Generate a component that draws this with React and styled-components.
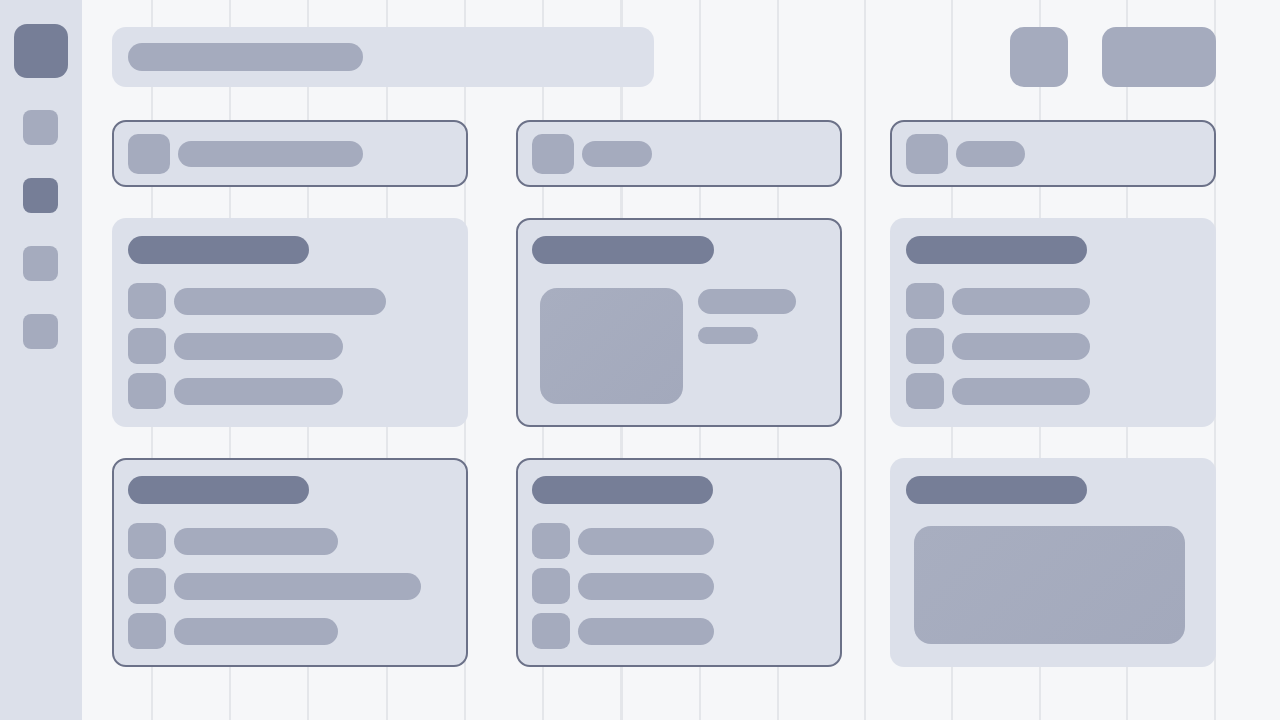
import React from "react";
import styled, { createGlobalStyle } from "styled-components";

const GlobalStyle = createGlobalStyle`
  html, body {
    margin: 0;
    padding: 0;
    background: #f6f7f9;
    font-family: "Inter", "Liberation Sans", sans-serif;
  }
  * { box-sizing: border-box; }
`;

const colors = {
  bg: "#f6f7f9",
  panel: "#dce0ea",
  mid: "#a5abbe",
  dark: "#767e97",
  border: "#6b7188",
  line: "#e4e6ea",
};

const Shell = styled.div`
  display: flex;
  width: 1280px;
  height: 720px;
  overflow: hidden;
`;

const Sidebar = styled.aside`
  width: 82px;
  flex-shrink: 0;
  background: ${colors.panel};
  display: flex;
  flex-direction: column;
  align-items: center;
  padding-top: 24px;
`;

const Logo = styled.div`
  width: 54px;
  height: 54px;
  border-radius: 13px;
  background: ${colors.dark};
  margin-bottom: 32px;
  margin-right: 1px;
`;

const NavItem = styled.div`
  width: 35px;
  height: 35px;
  border-radius: 8px;
  background: ${({ $active }) => ($active ? colors.dark : colors.mid)};
  margin-bottom: 33px;
  margin-right: 2px;
`;

/* vertical guide lines behind the content */
const Main = styled.main`
  flex: 1;
  padding: 27px 64px 0 30px;
  background-color: ${colors.bg};
  background-image:
    repeating-linear-gradient(to right, ${colors.line} 0 2px, transparent 2px 78.25px),
    repeating-linear-gradient(to right, ${colors.line} 0 2px, transparent 2px 87.5px);
  background-repeat: no-repeat;
  background-position: 69px 0, 782px 0;
  background-size: 630px 100%, 355px 100%;
`;

const TopBar = styled.header`
  display: flex;
  align-items: center;
  height: 60px;
  margin-bottom: 33px;
`;

const Search = styled.div`
  width: 542px;
  height: 60px;
  border-radius: 14px;
  background: ${colors.panel};
  display: flex;
  align-items: center;
  padding-left: 16px;
`;

const Bar = styled.div`
  width: ${({ $w }) => $w}px;
  height: ${({ $h = 27 }) => $h}px;
  border-radius: 999px;
  background: ${({ $dark }) => ($dark ? colors.dark : colors.mid)};
  flex-shrink: 0;
`;

const Actions = styled.div`
  margin-left: auto;
  display: flex;
  gap: 34px;
`;

const ActionBlock = styled.div`
  width: ${({ $w }) => $w}px;
  height: 60px;
  border-radius: 14px;
  background: ${colors.mid};
`;

const Grid = styled.div`
  display: grid;
  grid-template-columns: 356px 326px 326px;
  grid-template-rows: 67px 209px 209px;
  column-gap: 48px;
  row-gap: 31px;
`;

const Card = styled.div`
  background: ${colors.panel};
  border-radius: 14px;
  border: 2px solid ${({ $outlined }) => ($outlined ? colors.border : "transparent")};
  padding: 16px 14px;
  display: flex;
  flex-direction: column;
`;

const StatCard = styled(Card)`
  flex-direction: row;
  align-items: center;
  gap: 8px;
  padding: 0 14px;
`;

const Square = styled.div`
  width: ${({ $w }) => $w}px;
  height: ${({ $h }) => $h}px;
  border-radius: ${({ $r = 9 }) => $r}px;
  background: ${colors.mid};
  flex-shrink: 0;
`;

const List = styled.div`
  display: flex;
  flex-direction: column;
  gap: 9px;
  margin-top: 19px;
`;

const Row = styled.div`
  display: flex;
  align-items: center;
  gap: 8px;
  height: 36px;
`;

const Media = styled.div`
  display: flex;
  gap: 15px;
  margin-top: ${({ $top = 24 }) => $top}px;
  padding-left: 8px;
`;

const MediaText = styled.div`
  display: flex;
  flex-direction: column;
  gap: 13px;
  padding-top: 1px;
`;

const Picture = styled.div`
  width: ${({ $w }) => $w}px;
  height: ${({ $h }) => $h}px;
  border-radius: 17px;
  background: linear-gradient(135deg, #a8aec0, #a3a9bc);
  flex-shrink: 0;
`;

function ListCard({ outlined, bars, icon = 38 }) {
  return (
    <Card $outlined={outlined}>
      <Bar $w={181} $h={28} $dark />
      <List>
        {bars.map((w, i) => (
          <Row key={i}>
            <Square $w={icon} $h={36} />
            <Bar $w={w} />
          </Row>
        ))}
      </List>
    </Card>
  );
}

function Stat({ bar, outlined }) {
  return (
    <StatCard $outlined={outlined}>
      <Square $w={42} $h={40} $r={10} />
      <Bar $w={bar} $h={26} />
    </StatCard>
  );
}

export default function App() {
  return (
    <>
      <GlobalStyle />
      <Shell>
        <Sidebar>
          <Logo />
          <NavItem />
          <NavItem $active />
          <NavItem />
          <NavItem />
        </Sidebar>

        <Main>
          <TopBar>
            <Search>
              <Bar $w={235} $h={28} />
            </Search>
            <Actions>
              <ActionBlock $w={58} />
              <ActionBlock $w={114} />
            </Actions>
          </TopBar>

          <Grid>
            <Stat bar={185} outlined />
            <Stat bar={70} outlined />
            <Stat bar={69} outlined />

            <ListCard bars={[212, 169, 169]} />
            <Card $outlined>
              <Bar $w={182} $h={28} $dark />
              <Media>
                <Picture $w={143} $h={116} />
                <MediaText>
                  <Bar $w={98} $h={25} />
                  <Bar $w={60} $h={17} />
                </MediaText>
              </Media>
            </Card>
            <ListCard bars={[138, 138, 138]} />

            <ListCard outlined bars={[164, 247, 164]} />
            <ListCard outlined bars={[136, 136, 136]} />
            <Card>
              <Bar $w={181} $h={28} $dark />
              <Media $top={22}>
                <Picture $w={271} $h={118} />
              </Media>
            </Card>
          </Grid>
        </Main>
      </Shell>
    </>
  );
}
